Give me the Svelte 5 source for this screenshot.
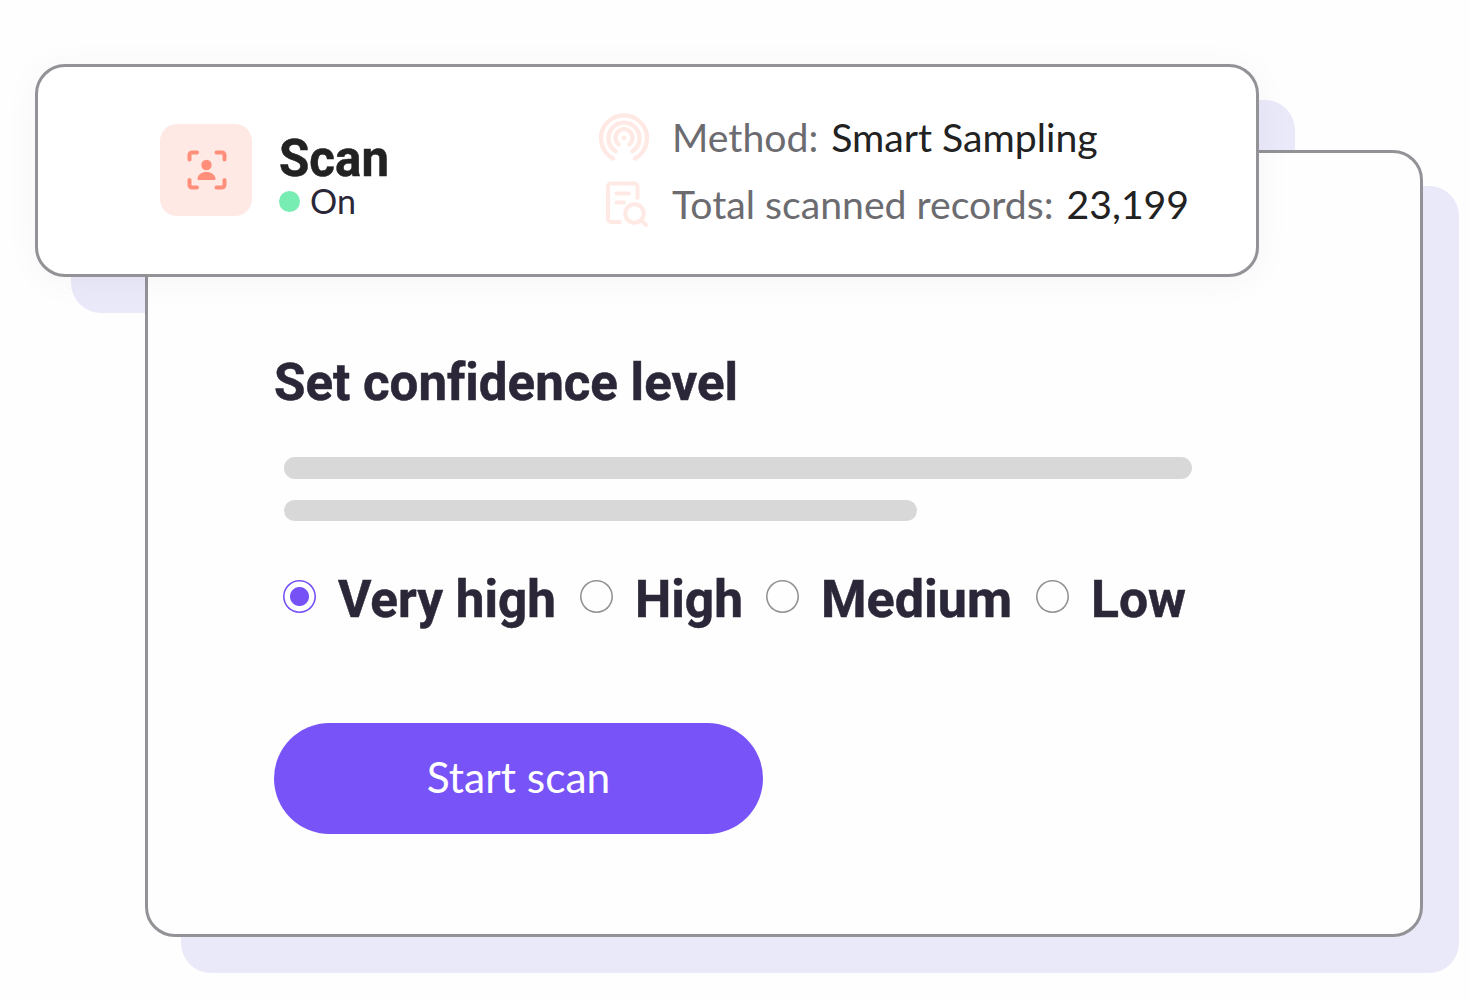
<script lang="ts">
	const details = [
		{ icon: 'sampling', label: 'Method:', value: 'Smart Sampling' },
		{ icon: 'records', label: 'Total scanned records:', value: '23,199' }
	];

	const levels = [
		{ name: 'Very high', width: 218 },
		{ name: 'High', width: 108 },
		{ name: 'Medium', width: 191 },
		{ name: 'Low', width: 95 }
	];

	let selected = $state('Very high');
</script>

{#snippet title(text: string, width: number)}
	<svg class="title" {width} height="51" role="img" aria-label={text}>
		<text x="0" y="50" textLength={width} lengthAdjust="spacingAndGlyphs">{text}</text>
	</svg>
{/snippet}

<main>
	<header>
		<div class="summary">
			<div class="badge">
				<svg width="40" height="40" viewBox="0 0 40 40">
					<path
						d="M2.5 9.500V5A2.500 2.500 0 0 1 5 2.500h5M29.500 2.500H35A2.500 2.500 0 0 1 37.500 5v4.500M37.500 30v5a2.500 2.500 0 0 1-2.500 2.500h-5.500M10 37.500H5A2.500 2.500 0 0 1 2.500 35v-5"
						fill="none"
						stroke="currentColor"
						stroke-width="4"
						stroke-linecap="round"
					/>
					<circle cx="19.500" cy="15" r="5.200" fill="currentColor" />
					<path d="M10.500 28.500c.6-4 4.300-6.500 9-6.500s8.400 2.500 9 6.500q.1 1.500-1 1.500h-16q-1.100 0-1-1.500z" fill="currentColor" />
				</svg>
			</div>
			<div class="state">
				<h2>{@render title('Scan', 110)}</h2>
				<p><span class="dot"></span>On</p>
			</div>
			<dl>
				{#each details as { icon, label, value }}
					<div class="detail">
						{#if icon === 'sampling'}
							<svg width="52" height="52" viewBox="0 0 52 52">
								<g fill="none" stroke="currentColor" stroke-width="4.300" stroke-linecap="round">
									<path d="M15 45.500A23 23 0 1 1 37 45.500" />
									<path d="M17.600 38.200A15.500 15.500 0 1 1 34.400 38.200" />
									<path d="M20.700 31.300A8.500 8.500 0 1 1 31.300 31.300" />
								</g>
								<circle cx="26" cy="25" r="2.300" fill="currentColor" />
							</svg>
						{:else}
							<svg width="52" height="52" viewBox="0 0 52 52">
								<g fill="none" stroke="currentColor" stroke-width="4" stroke-linecap="round" stroke-linejoin="round">
									<path d="M23.500 42H13a3 3 0 0 1-3-3V6.500a3 3 0 0 1 3-3h23.500a3 3 0 0 1 3 3v13" stroke-linecap="butt" />
									<path d="M18.500 13.500h12.500M18.500 22.500h7.500M43.500 40.500l4.500 4.500" />
									<circle cx="36.500" cy="33.500" r="9.200" />
								</g>
							</svg>
						{/if}
						<dt>{label}</dt>
						<dd>{value}</dd>
					</div>
				{/each}
			</dl>
		</div>
	</header>

	<section>
		<h1>{@render title('Set confidence level', 464)}</h1>
		<div class="lines">
			<div></div>
			<div></div>
		</div>
		<div class="levels" role="radiogroup">
			{#each levels as { name, width }}
				<label>
					<input type="radio" name="level" value={name} bind:group={selected} />
					{@render title(name, width)}
				</label>
			{/each}
		</div>
		<button>Start scan</button>
	</section>
</main>

<style>
	:global(body) {
		background: #fefefe;
	}

	main {
		box-sizing: border-box;
		width: 1470px;
		height: 1000px;
		padding: 64px 0 0 35px;
		overflow: hidden;
		isolation: isolate;
		font-family: Lato, 'Open Sans', sans-serif;
		color: #2b2738;
	}

	header {
		position: relative;
		width: 1224px;
		height: 213px;
	}

	/* flat plate, sits behind both cards */
	header::before {
		content: '';
		position: absolute;
		z-index: 0;
		inset: 36px -36px -36px 36px;
		border-radius: 30px;
		background: #eae9fa;
	}

	.summary {
		position: relative;
		z-index: 2;
		display: flex;
		box-sizing: border-box;
		height: 100%;
		padding: 45px 0 0 122px;
		border: 3px solid #929297;
		border-radius: 30px;
		background: #fff;
		box-shadow: 0 4px 36px rgb(0 0 0 / 0.04);
	}

	.badge {
		display: grid;
		place-items: center;
		box-sizing: border-box;
		width: 92px;
		height: 92px;
		margin-top: 12px;
		padding-left: 2px;
		border-radius: 17px;
		background: #ffe9e5;
		color: #ff8f7a;
	}

	.title {
		display: block;
		overflow: visible;
		font: 700 52.500px Roboto, 'Open Sans', sans-serif;
		font-variant-ligatures: none;
		fill: currentColor;
		stroke: currentColor;
		stroke-width: 0.5px;
	}

	h1,
	h2,
	p,
	dl,
	dd {
		margin: 0;
	}

	.state {
		width: 320px;
		padding: 14px 0 0 27px;
		box-sizing: border-box;
	}

	h2 {
		color: #222;
	}

	.state p {
		display: flex;
		align-items: center;
		gap: 10px;
		height: 34px;
		margin-top: 7px;
		font-size: 34px;
		line-height: 34px;
	}

	.dot {
		width: 21px;
		height: 21px;
		margin-top: 1px;
		border-radius: 50%;
		background: #77edb3;
	}

	dl {
		margin-left: 26px;
		font-size: 39.200px;
		line-height: 49px;
		color: #6b6b70;
	}

	.detail {
		display: flex;
		height: 67px;
	}

	.detail svg {
		margin: 1px 22px 0 0;
		color: #ffe9e5;
	}

	dd {
		margin-left: 13px;
		color: #222;
	}

	section {
		position: relative;
		z-index: 1;
		box-sizing: border-box;
		width: 1278px;
		height: 787px;
		margin: -127px 0 0 110px;
		padding: 197px 0 0 126px;
		border: 3px solid #929297;
		border-radius: 30px;
		background: #fefefe;
		box-shadow: 36px 36px 0 #eae9fa;
	}

	.lines {
		display: grid;
		gap: 21px;
		padding: 56px 0 0 9.500px;
	}

	.lines div {
		width: 908px;
		height: 21.500px;
		border-radius: 11px;
		background: #d8d8d8;
	}

	.lines div:last-child {
		width: 633.500px;
	}

	.levels {
		display: grid;
		grid-template-columns: 297px 186px 270px auto;
		height: 64px;
		padding: 46px 0 0 9px;
	}

	label {
		display: flex;
		align-items: flex-start;
		gap: 22px;
	}

	input {
		appearance: none;
		flex: none;
		width: 33px;
		height: 33px;
		margin: 13px 0 0;
		border-radius: 50%;
		box-shadow: inset 0 0 0 1.600px #929292;
	}

	input:checked {
		background: radial-gradient(circle, #7652f6 9px, transparent 10px);
		box-shadow: inset 0 0 0 1.600px #7652f6;
	}

	button {
		display: block;
		width: 489px;
		height: 111px;
		margin-top: 92px;
		padding: 0 0 4px;
		border: 0;
		border-radius: 56px;
		background: #7853f7;
		color: #fff;
		font: 42.500px Lato, 'Open Sans', sans-serif;
	}
</style>
